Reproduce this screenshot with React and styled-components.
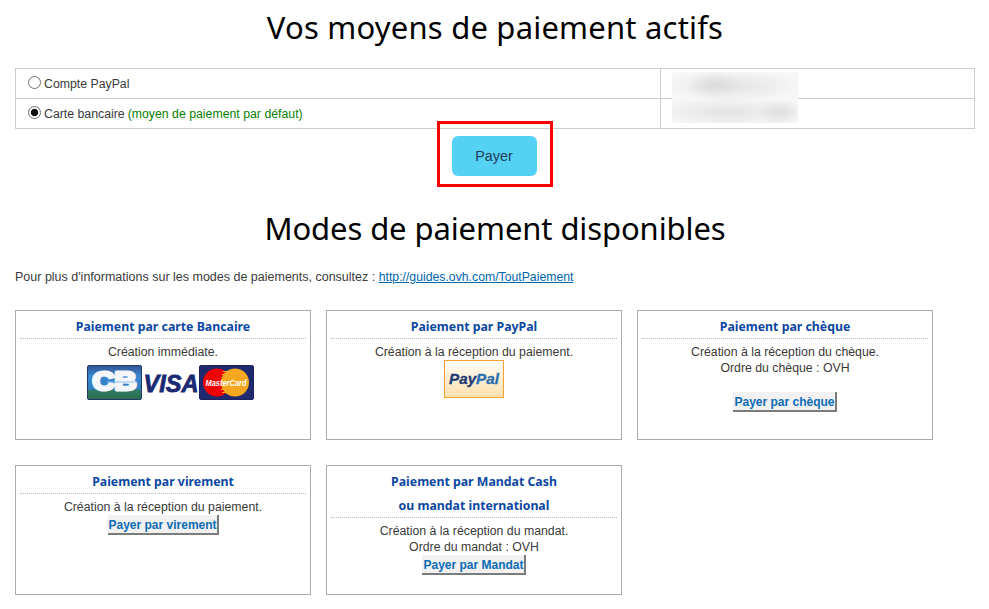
import React from "react";
import styled, { createGlobalStyle } from "styled-components";

const GlobalStyle = createGlobalStyle`
  html, body {
    margin: 0;
    padding: 0;
    background: #fff;
    overflow: hidden;
  }
  body {
    font-family: "Liberation Sans", Arial, sans-serif;
    font-size: 12.3px;
    line-height: 16px;
    color: #3a3a3a;
  }
`;

const Page = styled.div`
  width: 960px;
  height: 609px;
  padding: 0 14px 0 15px;
`;

const Heading = styled.h1`
  margin: 0;
  height: ${(p) => p.$height}px;
  padding-top: ${(p) => p.$top}px;
  box-sizing: border-box;
  text-align: center;
  font-family: "Noto Sans", "Open Sans", sans-serif;
  font-size: 31px;
  letter-spacing: ${(p) => p.$spacing}px;
  line-height: 40px;
  font-weight: 400;
  color: #000;
`;

const TableWrap = styled.div`
  position: relative;
`;

const MethodTable = styled.table`
  width: 960px;
  border-collapse: collapse;
  table-layout: fixed;
`;

const Cell = styled.td`
  height: 29px;
  padding: 0 0 0 12px;
  border: 1px solid #ccc;
  vertical-align: middle;
  &:first-child {
    width: 632px;
  }
`;

const RadioLabel = styled.label`
  display: flex;
  align-items: center;
  gap: 3px;
`;

const Radio = styled.input.attrs({ type: "radio" })`
  appearance: none;
  box-sizing: border-box;
  width: 13px;
  height: 13px;
  margin: -3px 0 0 0;
  border: 1px solid #707070;
  border-radius: 50%;
  background: #fff;
  &:checked {
    background: radial-gradient(circle, #111 0, #111 3.2px, #fff 4.2px);
  }
`;

const DefaultNote = styled.span`
  margin-left: 3px;
  color: #0a8000;
`;

const Blurred = styled.div`
  position: absolute;
  left: 657px;
  top: 4px;
  width: 126px;
  height: 51px;
  overflow: hidden;
  background:
    radial-gradient(ellipse 26px 13px at 42px 13px, #dcdcdc, transparent),
    radial-gradient(ellipse 72px 16px at 60px 14px, #e3e3e3, transparent),
    radial-gradient(ellipse 22px 13px at 108px 40px, #dedede, transparent),
    radial-gradient(ellipse 78px 15px at 55px 40px, #e3e3e3, transparent),
    #f7f7f7;
`;

const PayRow = styled.div`
  display: flex;
  justify-content: center;
  padding: 7px 2px 0 0;
`;

const PayHolder = styled.div`
  position: relative;
`;

const PayButton = styled.button`
  display: block;
  width: 85px;
  height: 40px;
  border: 0;
  border-radius: 6px;
  background: #54d1f3;
  color: #1f3d5a;
  font-family: "Liberation Sans", Arial, sans-serif;
  font-size: 14.3px;
`;

const Highlight = styled.div`
  position: absolute;
  left: -15px;
  top: -15px;
  width: 116px;
  height: 66px;
  box-sizing: border-box;
  border: 3px solid #ff0000;
  pointer-events: none;
`;

const Info = styled.p`
  margin: 0;
  padding-top: 17px;
  height: 34px;
  font-size: 12.5px;
`;

const InfoLink = styled.a`
  color: #0066aa;
  font-size: 12.25px;
  text-decoration: underline;
`;

const Cards = styled.div`
  display: grid;
  grid-template-columns: repeat(3, 296px);
  column-gap: 15px;
  row-gap: 25px;
  margin-top: 7px;
`;

const Card = styled.section`
  box-sizing: border-box;
  height: 130px;
  padding: 4px 4px 0;
  border: 1px solid #aaa;
  text-align: center;
`;

const CardTitle = styled.h3`
  margin: 0 0 5px;
  border-bottom: 1px dotted #bbb;
  font-family: "Noto Sans", "Open Sans", sans-serif;
  font-size: 12.3px;
  line-height: 24px;
  font-weight: 700;
  color: #0b47a1;
`;

const TitleText = styled.span`
  display: block;
  margin-bottom: -1px;
`;

const Line = styled.div`
  height: 16px;
`;

const ActionButton = styled.button`
  display: block;
  box-sizing: border-box;
  height: 20px;
  margin: ${(p) => (p.$spaced ? "16px" : "0")} auto 0;
  padding: 2px 0 0 1px;
  border: 0;
  border-right: 2px solid #7b7b7b;
  border-bottom: 2px solid #7b7b7b;
  background: #f1f1f1;
  color: #0b6cb5;
  font-family: "Liberation Sans", Arial, sans-serif;
  font-size: 12px;
  font-weight: 700;
  white-space: nowrap;
  width: ${(p) => p.$width}px;
`;

const LogoRow = styled.div`
  display: flex;
  justify-content: center;
  align-items: flex-start;
  margin-top: 5px;
  padding-left: 14px;
`;

const PaypalBox = styled.div`
  display: flex;
  justify-content: center;
  align-items: center;
  box-sizing: border-box;
  width: 60px;
  height: 38px;
  margin: 0 auto;
  border: 1px solid #f7a033;
  background: linear-gradient(#fffdf8, #fde0ad);
`;

const CbLogo = () => (
  <svg width="55" height="35" viewBox="0 0 55 35">
    <defs>
      <linearGradient id="cbFill" x1="0" y1="0" x2="0" y2="1">
        <stop offset="0" stopColor="#34528f" />
        <stop offset="0.3" stopColor="#3a86d0" />
        <stop offset="0.68" stopColor="#2f7fc0" />
        <stop offset="0.74" stopColor="#2f7a62" />
        <stop offset="1" stopColor="#2c6a4d" />
      </linearGradient>
    </defs>
    <rect x="0.5" y="0.5" width="54" height="34" rx="1.5" fill="url(#cbFill)" stroke="#223a66" />
    <text
      x="27.5"
      y="25"
      textAnchor="middle"
      fontFamily="Liberation Sans, sans-serif"
      fontSize="25"
      fontWeight="700"
      fill="#f4f7fa"
      stroke="#f4f7fa"
      strokeWidth="3"
      strokeLinejoin="round"
      textLength="44"
      lengthAdjust="spacingAndGlyphs"
    >
      CB
    </text>
    <rect x="20" y="16.5" width="30" height="1" fill="#8fc0ea" />
  </svg>
);

const VisaLogo = () => (
  <svg width="57" height="35" viewBox="0 0 57 35">
    <text
      x="29"
      y="27"
      textAnchor="middle"
      fontFamily="Liberation Sans, sans-serif"
      fontSize="24"
      fontWeight="700"
      fontStyle="italic"
      fill="#1a2a72"
      stroke="#1a2a72"
      strokeWidth="0.8"
      textLength="55"
      lengthAdjust="spacingAndGlyphs"
    >
      VISA
    </text>
  </svg>
);

const MastercardLogo = () => (
  <svg width="55" height="35" viewBox="0 0 55 35">
    <rect x="0.5" y="0.5" width="54" height="34" rx="1.5" fill="#1f2a6e" stroke="#1a2260" />
    <circle cx="18" cy="17.5" r="14" fill="#f00000" />
    <circle cx="36" cy="17.5" r="14" fill="#f5a81f" />
    <g stroke="#f5a81f" strokeWidth="1">
      <line x1="24" y1="6.5" x2="30" y2="6.5" />
      <line x1="23" y1="9.5" x2="31" y2="9.5" />
      <line x1="22" y1="24.5" x2="32" y2="24.5" />
      <line x1="23" y1="27.5" x2="31" y2="27.5" />
    </g>
    <text
      x="27"
      y="21"
      textAnchor="middle"
      fontFamily="Liberation Sans, sans-serif"
      fontSize="9"
      fontWeight="700"
      fontStyle="italic"
      fill="#fff"
      textLength="41"
      lengthAdjust="spacingAndGlyphs"
    >
      MasterCard
    </text>
  </svg>
);

const PaypalLogo = () => (
  <svg width="54" height="20" viewBox="0 0 54 20">
    <text
      x="2"
      y="15"
      fontFamily="Liberation Sans, sans-serif"
      fontSize="15"
      fontWeight="700"
      fontStyle="italic"
      strokeWidth="0.3"
      textLength="50"
      lengthAdjust="spacingAndGlyphs"
    >
      <tspan fill="#1c3b73" stroke="#1c3b73">Pay</tspan>
      <tspan fill="#2a6db0" stroke="#2a6db0">Pal</tspan>
    </text>
  </svg>
);

export default function App() {
  return (
    <Page>
      <GlobalStyle />
      <Heading $height={68} $top={7} $spacing={0.2}>Vos moyens de paiement actifs</Heading>
      <TableWrap>
        <MethodTable>
          <tbody>
            <tr>
              <Cell>
                <RadioLabel>
                  <Radio name="moyen" readOnly />
                  <span>Compte PayPal</span>
                </RadioLabel>
              </Cell>
              <Cell />
            </tr>
            <tr>
              <Cell>
                <RadioLabel>
                  <Radio name="moyen" defaultChecked />
                  <span>
                    Carte bancaire<DefaultNote>(moyen de paiement par défaut)</DefaultNote>
                  </span>
                </RadioLabel>
              </Cell>
              <Cell />
            </tr>
          </tbody>
        </MethodTable>
        <Blurred />
      </TableWrap>
      <PayRow>
        <PayHolder>
          <PayButton>Payer</PayButton>
          <Highlight />
        </PayHolder>
      </PayRow>
      <Heading $height={76} $top={32} $spacing={-0.1}>Modes de paiement disponibles</Heading>
      <Info>
        Pour plus d'informations sur les modes de paiements, consultez :{" "}
        <InfoLink href="#">http://guides.ovh.com/ToutPaiement</InfoLink>
      </Info>
      <Cards>
        <Card>
          <CardTitle><TitleText>Paiement par carte Bancaire</TitleText></CardTitle>
          <Line>Création immédiate.</Line>
          <LogoRow>
            <CbLogo />
            <VisaLogo />
            <MastercardLogo />
          </LogoRow>
        </Card>
        <Card>
          <CardTitle><TitleText>Paiement par PayPal</TitleText></CardTitle>
          <Line>Création à la réception du paiement.</Line>
          <PaypalBox>
            <PaypalLogo />
          </PaypalBox>
        </Card>
        <Card>
          <CardTitle><TitleText>Paiement par chèque</TitleText></CardTitle>
          <Line>Création à la réception du chèque.</Line>
          <Line>Ordre du chèque : OVH</Line>
          <ActionButton $spaced $width={104}>Payer par chèque</ActionButton>
        </Card>
        <Card>
          <CardTitle><TitleText>Paiement par virement</TitleText></CardTitle>
          <Line>Création à la réception du paiement.</Line>
          <ActionButton $width={111}>Payer par virement</ActionButton>
        </Card>
        <Card>
          <CardTitle>
            <TitleText>
              Paiement par Mandat Cash
              <br />
              ou mandat international
            </TitleText>
          </CardTitle>
          <Line>Création à la réception du mandat.</Line>
          <Line>Ordre du mandat : OVH</Line>
          <ActionButton $width={104}>Payer par Mandat</ActionButton>
        </Card>
      </Cards>
    </Page>
  );
}
